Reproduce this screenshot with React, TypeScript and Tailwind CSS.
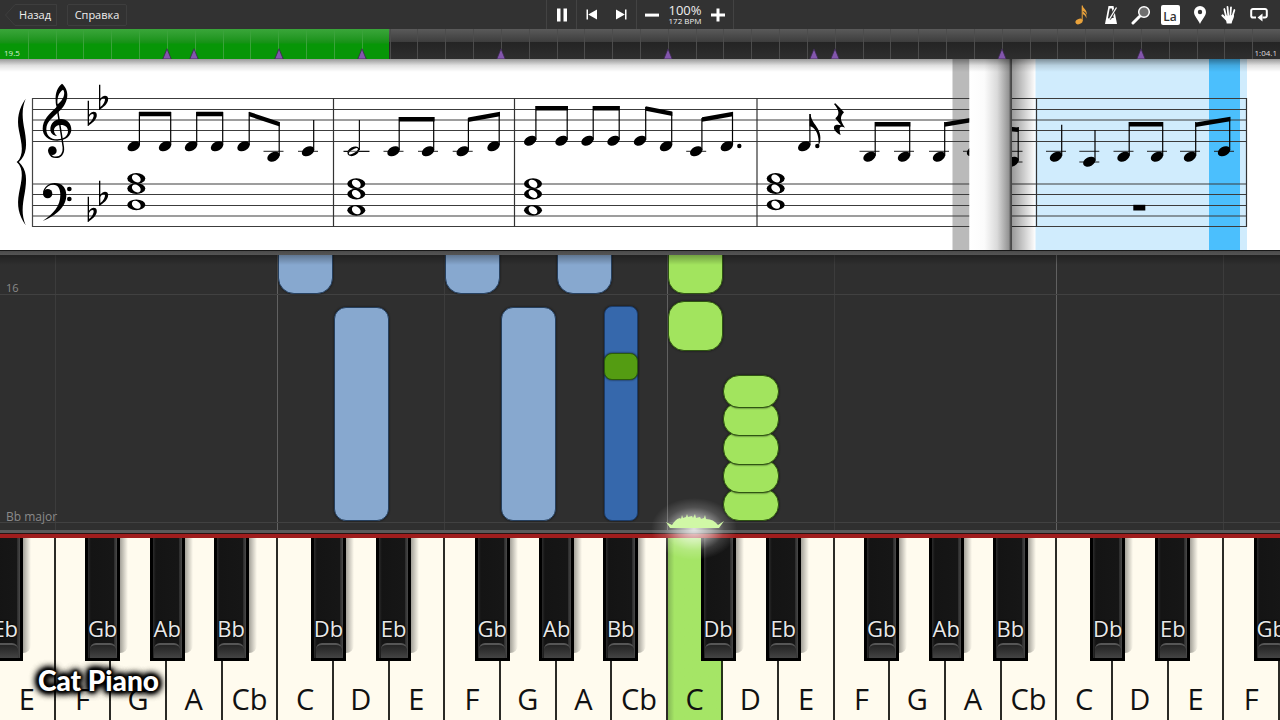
import React from "react";

const WHITE_KEYS = [
  "E", "F", "G", "A", "Cb", "C", "D", "E", "F", "G", "A", "Cb",
  "C", "D", "E", "F", "G", "A", "Cb", "C", "D", "E", "F",
];
const KEY = 100 / WHITE_KEYS.length;
const PRESSED = 12;

// Left edges of the black keys, counted in white-key widths
const BLACK_KEYS: [string, number][] = [
  ["Eb", -0.22], ["Gb", 1.53], ["Ab", 2.69], ["Bb", 3.84],
  ["Db", 5.59], ["Eb", 6.76], ["Gb", 8.53], ["Ab", 9.69], ["Bb", 10.84],
  ["Db", 12.59], ["Eb", 13.76], ["Gb", 15.53], ["Ab", 16.69], ["Bb", 17.84],
  ["Db", 19.59], ["Eb", 20.76], ["Gb", 22.53],
];

const LANES = [1, 5, 8, 12, 15, 19, 22];
const STRONG_LANES = [5, 12, 19];

const BLUE = "border-[#26405f] bg-[#87a8cf]";
const DARK_BLUE = "border-[#1c3d6b] bg-[#3668ac]";
const GREEN = "border-[#2f5511] bg-[#a2e45e]";
const DARK_GREEN = "border-[#2b5c0c] bg-[#549c12]";

// lane, width in lanes, distance from the hit line, height, style
type Note = { lane: number; width: number; bottom: number; height: number; look: string };
const NOTES: Note[] = [
  { lane: 5, width: 0.99, bottom: 236, height: 60, look: `rounded-2xl ${BLUE}` },
  { lane: 8, width: 0.99, bottom: 236, height: 60, look: `rounded-2xl ${BLUE}` },
  { lane: 10, width: 0.99, bottom: 236, height: 60, look: `rounded-2xl ${BLUE}` },
  { lane: 12, width: 0.99, bottom: 236, height: 60, look: `rounded-2xl ${GREEN}` },
  { lane: 6, width: 0.99, bottom: 9, height: 214, look: `rounded-xl ${BLUE}` },
  { lane: 9, width: 0.99, bottom: 9, height: 214, look: `rounded-xl ${BLUE}` },
  { lane: 10.86, width: 0.6, bottom: 9, height: 215, look: `rounded-lg ${DARK_BLUE}` },
  { lane: 10.86, width: 0.6, bottom: 150, height: 27, look: `rounded-lg ${DARK_GREEN}` },
  { lane: 12, width: 0.99, bottom: 179, height: 50, look: `rounded-2xl ${GREEN}` },
  { lane: 13, width: 0.99, bottom: 9, height: 33, look: `rounded-2xl ${GREEN}` },
  { lane: 13, width: 0.99, bottom: 37, height: 34, look: `rounded-2xl ${GREEN}` },
  { lane: 13, width: 0.99, bottom: 65, height: 34, look: `rounded-2xl ${GREEN}` },
  { lane: 13, width: 0.99, bottom: 94, height: 34, look: `rounded-2xl ${GREEN}` },
  { lane: 13, width: 0.99, bottom: 122, height: 33, look: `rounded-2xl ${GREEN}` },
];

const TICKS = Array.from({ length: 45 }, (_, i) => i + 1);
const MARKERS = [166, 193, 278, 361, 500, 667, 813, 834, 1001, 1140];

function ToolButton({ label, children }: { label: string; children: React.ReactNode }) {
  return (
    <button aria-label={label} className="flex h-[29px] w-[29px] items-center justify-center text-white">
      {children}
    </button>
  );
}

function Toolbar() {
  return (
    <header className="grid h-[29px] grid-cols-[1fr_auto_1fr] items-center bg-[#323232]">
      <div className="flex items-center gap-[10px] pl-[5px] text-[11px] leading-4 text-[#eeeeee]">
        <button className="relative flex h-[22px] w-[52px] items-center justify-end pr-[6px]">
          <svg viewBox="0 0 52 22" className="absolute inset-0 h-full w-full" fill="none" stroke="#3e3e3e">
            <path d="M51.5 .5H10L.5 11l9.500 10.500h41.500z" />
          </svg>
          <span className="relative">Назад</span>
        </button>
        <button className="flex h-[22px] w-[60px] items-center justify-center rounded-[2px] border border-[#3e3e3e]">
          Справка
        </button>
      </div>

      <div className="flex h-full items-center">
        <div className="flex h-full w-[31px] items-center justify-center border-x border-[#434343]">
          <button aria-label="Pause">
            <svg width="12" height="14" viewBox="0 0 12 14" fill="#fff"><path d="M1 .5h3.500v13H1zM7.500 .5H11v13H7.500z" /></svg>
          </button>
        </div>
        <div className="flex h-full w-[60px] items-center justify-around border-r border-[#434343]">
          <button aria-label="Previous">
            <svg width="12" height="11" viewBox="0 0 12 11" fill="#fff"><path d="M.5 .5H2v10H.5zM2.200 5.500 11 .5v10z" /></svg>
          </button>
          <button aria-label="Next">
            <svg width="12" height="11" viewBox="0 0 12 11" fill="#fff"><path d="M11.500 .5H10v10h1.500zM9.800 5.500 1 .5v10z" /></svg>
          </button>
        </div>
        <div className="flex h-full w-[97px] items-center justify-between border-r border-[#434343] px-[8px]">
          <button aria-label="Slower">
            <svg width="14" height="14" viewBox="0 0 14 14" fill="#fff"><path d="M0 5.600h14v3H0z" /></svg>
          </button>
          <div className="flex flex-col items-center text-[#eeeeee]">
            <span className="text-[13px] leading-[13px]">100%</span>
            <span className="text-[8px] leading-[8px]">172 BPM</span>
          </div>
          <button aria-label="Faster">
            <svg width="14" height="14" viewBox="0 0 14 14" fill="#fff"><path d="M5.500 .5h3v5H14v3H8.500v5h-3v-5H0v-3h5.500z" /></svg>
          </button>
        </div>
      </div>

      <div className="mr-[7px] flex w-[206px] items-center justify-between justify-self-end">
        <ToolButton label="Notes">
          <svg width="16" height="22" viewBox="0 0 16 22" fill="#e9a23b">
            <ellipse cx="5" cy="17.500" rx="3.700" ry="2.600" transform="rotate(-25 5 17.500)" />
            <path d="M7.700 1.500h1.100C9 5 13.500 5.500 12.800 11c-.6-2.400-2-3.500-4.100-4.300V17H7.700z" />
            <path d="M8.500 6c1 3 5 3.500 3.800 8.500-.4-2.400-1.700-3.700-3.800-4.500z" />
          </svg>
        </ToolButton>
        <ToolButton label="Metronome">
          <svg width="16" height="20" viewBox="0 0 16 20" fill="none">
            <path d="M5.500 1h5l3.500 18H2z" fill="#fff" />
            <path d="M6.700 3.500h2.200l1.800 9.500H5z" fill="#323232" />
            <path d="M6.500 14 13.500 2.500" stroke="#323232" strokeWidth="3" />
            <path d="M6.500 14 13.500 2.500" stroke="#fff" strokeWidth="1.300" />
          </svg>
        </ToolButton>
        <ToolButton label="Zoom">
          <svg width="20" height="20" viewBox="0 0 20 20" fill="none" stroke="#fff">
            <path d="M2 18 8.500 11.500" strokeWidth="3" strokeLinecap="round" />
            <circle cx="13" cy="7" r="5.300" fill="#6e6e6e" strokeWidth="1.500" />
          </svg>
        </ToolButton>
        <ToolButton label="Note names">
          <span className="flex h-[20px] w-[19px] items-end justify-center rounded-[2px] bg-white pb-[2px] text-[12px] font-semibold leading-none text-[#333333]">La</span>
        </ToolButton>
        <ToolButton label="Bookmark">
          <svg width="14" height="18" viewBox="0 0 14 18" fill="#fff" fillRule="evenodd">
            <path d="M7 0a6 6 0 0 1 6 6c0 4-4 7.500-6 12C5 13.500 1 10 1 6a6 6 0 0 1 6-6zm0 3.800a2.200 2.200 0 1 0 0 4.400 2.200 2.200 0 0 0 0-4.400z" />
          </svg>
        </ToolButton>
        <ToolButton label="Hands">
          <svg width="16" height="20" viewBox="0 0 16 20" fill="#fff" stroke="#fff" strokeLinecap="round">
            <path d="M4 10.500 13 10c.4 3-1.800 5-2.400 8.500H5.700C5.500 16 4.300 14 4 10.500z" stroke="none" />
            <path d="M5 11 3.300 4M7.200 10 6.500 2M9.400 10 10 2.300M11.400 11.500 13.400 5" strokeWidth="1.800" />
            <path d="M5.500 14.500 1.500 10.500" strokeWidth="2.200" />
          </svg>
        </ToolButton>
        <ToolButton label="Loop">
          <svg width="18" height="15" viewBox="0 0 18 15" fill="none" stroke="#fff" strokeWidth="2">
            <path d="M6 10.500H3A1.800 1.800 0 0 1 1.200 8.700V3.800A1.800 1.800 0 0 1 3 2h12a1.800 1.800 0 0 1 1.800 1.800v4.900A1.800 1.800 0 0 1 15 10.500h-2.500" />
            <path d="M12.500 6.500v8l-5-4z" fill="#fff" stroke="none" />
          </svg>
        </ToolButton>
      </div>
    </header>
  );
}

function Timeline() {
  return (
    <div className="relative h-[30px] overflow-hidden bg-linear-to-b from-[#5a5a5a] via-[#3c3c3c] via-45% to-[#2a2a2a]">
      <div className="absolute inset-x-0 bottom-0 h-[17px] bg-linear-to-b from-[#242424] to-[#2e2e2e]" />
      <div className="absolute inset-y-0 left-0 w-[30.4%] bg-linear-to-b from-[#3aa63a] from-0% via-[#169216] via-45% to-[#079607] to-50%" />
      {TICKS.map((i) => (
        <div
          key={i}
          className={i < 14 ? "absolute inset-y-0 w-px bg-[#3aa33a]" : "absolute inset-y-0 w-px bg-[#4c4c4c]"}
          style={{ left: `${(i * 100) / 46}%` }}
        />
      ))}
      {MARKERS.map((x) => (
        <svg key={x} viewBox="0 0 10 11" className="absolute bottom-0 -ml-[4px] h-[11px] w-[10px]" style={{ left: `${x / 12.8}%` }}>
          <path d="M5 .8 9.200 11H.8z" fill="#8356ad" stroke="#3a2a4d" strokeWidth=".8" />
        </svg>
      ))}
      <span className="absolute bottom-[1px] left-[4px] text-[8px] leading-[10px] text-[#d6f0d6]">19.5</span>
      <span className="absolute bottom-[1px] right-[3px] text-[8px] leading-[10px] text-[#dddddd]">1:04.1</span>
    </div>
  );
}

const STAFF_LINES = [98.5, 109.5, 120, 130.500, 141.500, 184, 194.500, 205.500, 216, 226.500];

// x of the head, y of the head, y of the stem's top
const HEADS: [number, number, number][] = [
  [133.700, 146.300, 112], [165, 146.300, 112], [191, 146.300, 112], [217, 146.300, 112],
  [243.500, 146.300, 112], [273.500, 156.700, 122], [308, 151.300, 120],
  [393.500, 151.300, 117], [428, 151.300, 117], [462.700, 151.300, 118], [493.500, 146.300, 112],
  [530.200, 140.700, 106], [561.500, 140.700, 106], [587.500, 140.700, 106], [613.500, 140.700, 106],
  [640, 140.700, 107], [666, 146.300, 112], [696.200, 151.300, 118], [726.800, 146.300, 112],
  [804.200, 146.300, 114], [869.500, 156.700, 122], [904, 156.700, 122], [939, 156.700, 122],
  [973, 151.300, 120], [1012.500, 161.700, 127],
  [1056, 156.700, 124.700], [1089.300, 161.700, 130], [1123.500, 156.700, 122], [1157, 156.700, 122],
  [1190, 156.700, 122], [1224, 151.300, 117],
];

// Beams: x1, y1, x2, y2 of the upper edge
const BEAMS: [number, number, number, number][] = [
  [139, 111.700, 171, 111.700], [196.300, 111.700, 223, 111.700], [249, 111.700, 279.700, 122],
  [399, 117, 434.500, 117], [468.200, 117.500, 500, 111.700],
  [535.800, 106, 568, 106], [593, 106, 619.500, 106], [645.700, 106.300, 672.300, 111.500],
  [702, 117.300, 733, 111.700], [875, 122, 910.300, 122], [944.700, 122.200, 979, 116.500],
  [1002, 126, 1018.600, 127.500], [1129, 122, 1163, 122], [1195.700, 122.500, 1230.300, 116.800],
];

const WHOLES: [number, number][] = [
  [136.300, 178.500], [136.300, 188.500], [136.300, 204.800],
  [356.300, 183.700], [356.300, 194], [356.300, 210.300],
  [533, 183.700], [533, 194], [533, 210.300],
  [775.700, 178.500], [775.700, 188.500], [775.700, 204.800],
];

const FLAT = "M-1 0H3V42C9 33 18 31 23 35 29 41 27 53 18 62 12 68 6 71 1 76H-1zM3 49V67C12 60 18 50 17 42 14 37 7 41 3 49z";
const HALF_BRACE =
  "M77 116C56 146 50 175 57 212C65 252 74 284 50 307H56C82 282 81 254 74 212C67 175 64 148 77 116z";

function Heads() {
  return (
    <g>
      {HEADS.map(([x, y, top]) => (
        <g key={x}>
          {y > 150 && <path d={`M${x - 10} 151.300h20`} stroke="#222" />}
          {y > 160 && <path d={`M${x - 10} 162h20`} stroke="#222" />}
          <ellipse cx={x} cy={y} rx="6.600" ry="4.500" transform={`rotate(-28 ${x} ${y})`} />
          <path d={`M${x + 5.700} ${y - 1}V${top}`} stroke="#000" strokeWidth="1.200" />
        </g>
      ))}
      {BEAMS.map(([x1, y1, x2, y2]) => (
        <path key={x1} d={`M${x1} ${y1}L${x2} ${y2}v4.500L${x1} ${y1 + 4.500}z`} />
      ))}
    </g>
  );
}

function SheetMusic() {
  return (
    <svg viewBox="0 59 1280 191" className="block h-auto w-full bg-white" role="img" aria-label="Sheet music">
      <defs>
        <linearGradient id="top" x1="0" y1="0" x2="0" y2="1">
          <stop offset="0" stopColor="#000" stopOpacity=".4" />
          <stop offset=".5" stopColor="#000" stopOpacity=".12" />
          <stop offset="1" stopColor="#000" stopOpacity="0" />
        </linearGradient>
        <linearGradient id="curl">
          <stop offset="0" stopColor="#fff" />
          <stop offset=".35" stopColor="#fbfbfb" />
          <stop offset=".65" stopColor="#dadada" />
          <stop offset=".93" stopColor="#929292" />
          <stop offset=".96" stopColor="#555" />
          <stop offset="1" stopColor="#444" />
        </linearGradient>
        <linearGradient id="fold">
          <stop offset="0" stopColor="#000" stopOpacity=".4" />
          <stop offset=".5" stopColor="#000" stopOpacity=".2" />
          <stop offset="1" stopColor="#000" stopOpacity="0" />
        </linearGradient>
        <clipPath id="pages"><path d="M0 59h969.500v191H0zM1012 59h268v191h-268z" /></clipPath>
      </defs>

      <rect x="1035.500" y="59" width="211.500" height="191" fill="#d0ecfd" />
      <rect x="1209" y="59" width="31" height="191" fill="#4bbffd" />
      <rect x="952.500" y="59" width="17" height="191" fill="#bababa" />

      <g clipPath="url(#pages)">
        {STAFF_LINES.map((y) => (
          <path key={y} d={`M32.500 ${y}H1247`} stroke="#3c3c3c" strokeWidth="1.100" />
        ))}
        {[333.500, 514.500, 757, 1036.500, 1246.500].map((x) => (
          <path key={x} d={`M${x} 98V227`} stroke="#333" strokeWidth="1.200" />
        ))}
        <path d="M32.500 98V227" stroke="#444" strokeWidth="1.200" />
        <Heads />

        {/* half note */}
        <path d="M343.500 151.300h26M359.400 150V120" stroke="#111" strokeWidth="1.200" />
        <ellipse cx="353.400" cy="151.300" rx="6.400" ry="4.300" transform="rotate(-28 353.400 151.300)" />
        <ellipse cx="353.400" cy="151.300" rx="5.200" ry="1.800" fill="#fff" transform="rotate(-32 353.400 151.300)" />
        <path d="M348 151.300h11" stroke="#333" strokeWidth=".8" />

        {WHOLES.map(([x, y]) => (
          <g key={`${x}-${y}`}>
            <ellipse cx={x} cy={y} rx="9" ry="5.400" />
            <ellipse cx={x} cy={y} rx="4.800" ry="3.500" fill="#fff" transform={`rotate(35 ${x} ${y})`} />
          </g>
        ))}
        <circle cx="739.300" cy="146" r="2.200" />
        <circle cx="817.300" cy="146" r="2.200" />
        <rect x="1133.300" y="204.800" width="12" height="5.700" />

        <g transform="translate(660 60) scale(.33333)">
          <path d="M449 162h3c1 20 12 27 22 45 9 17 10 36 1 52 3-22-2-42-12-52-5-5-9-7-14-8z" />
          <path d="M526 130c9 9 18 18 26 27-11 12-14 22 3 46-10-5-17-3-16 6 0 6 1 11 3 16-13-6-24-18-19-27 4-5 13-5 20-2l-17-21c12-10 14-22-4-43z" />
        </g>
        <g transform="translate(0 60) scale(.33333)">
          <path d={HALF_BRACE} />
          <path d={HALF_BRACE} transform="translate(0 612) scale(1 -1)" />
          <path
            fillRule="evenodd"
            d="M186 71c-12 8-21 27-19 51 0 8 1 13 3 19-22 20-42 39-42 65 0 22 18 36 44 36 25 0 42-14 42-34 0-18-13-31-31-31-19 0-32 14-32 31 0 11 8 19 20 20-6-6-9-11-9-16 0-11 9-17 21-17 13 0 21 7 21 19 0 15-14 24-32 24-21 0-34-13-33-32 1-20 17-32 36-50 17-15 27-32 27-52 0-14-8-27-16-33zm3 18c6 6 4 19-2 28-4 7-9 12-14 16-3-18 4-37 16-44z"
          />
          <path d="M171 140l19 122c2 19-8 30-22 30-9 0-17-5-20-14" fill="none" stroke="#000" strokeWidth="4.500" />
          <circle cx="157" cy="272" r="13" />
          <path d="M129 402c1-21 16-33 35-33 22 0 35 14 35 36 0 37-33 63-71 78 32-21 53-45 53-78 0-20-7-31-21-31-11 0-19 5-24 14z" />
          <circle cx="143" cy="401" r="14" />
          <circle cx="208" cy="387" r="7" />
          <circle cx="208" cy="417" r="7" />
          <g fillRule="evenodd">
            <path transform="translate(264 122)" d={FLAT} />
            <path transform="translate(298 74)" d={FLAT} />
            <path transform="translate(264 410)" d={FLAT} />
            <path transform="translate(298 362)" d={FLAT} />
          </g>
        </g>
      </g>

      <rect x="969.500" y="59" width="42.500" height="191" fill="url(#curl)" />
      <rect x="1012" y="59" width="23.500" height="191" fill="url(#fold)" />
      <rect x="0" y="59" width="1280" height="13" fill="url(#top)" />
    </svg>
  );
}

function PianoRoll() {
  return (
    <section className="relative min-h-[275px] flex-1 overflow-hidden bg-[#2f2f2f]">
      {LANES.map((n) => (
        <div
          key={n}
          className={STRONG_LANES.includes(n) ? "absolute inset-y-0 -ml-px w-px bg-[#616161]" : "absolute inset-y-0 -ml-px w-px bg-[#3c3c3c]"}
          style={{ left: `${n * KEY}%` }}
        />
      ))}
      <div className="absolute inset-x-0 bottom-[235px] h-px bg-[#414141]" />
      <div className="absolute inset-x-0 bottom-[7px] h-px bg-[#414141]" />
      <span className="absolute bottom-[234px] left-[6px] text-[11px] leading-4 text-[#8a8a8a]">16</span>
      <span className="absolute bottom-[5px] left-[6px] text-[12px] leading-4 text-[#8a8a8a]">Bb major</span>
      {NOTES.map((n, i) => (
        <div
          key={i}
          className={`absolute border-[1px] shadow-[0_0_2px_#111111] ${n.look}`}
          style={{ left: `${n.lane * KEY}%`, width: `${n.width * KEY}%`, bottom: n.bottom, height: n.height }}
        />
      ))}
      <div className="absolute inset-x-0 top-0 h-[10px] bg-linear-to-b from-black/30 to-transparent" />
    </section>
  );
}

function HitFlare() {
  return (
    <svg
      viewBox="0 0 90 70"
      className="pointer-events-none absolute -top-[43px] -ml-[17px] h-[70px] w-[90px]"
      style={{ left: `${PRESSED * KEY}%` }}
    >
      <defs>
        <radialGradient id="flare">
          <stop offset="0" stopColor="#fff" stopOpacity=".85" />
          <stop offset=".4" stopColor="#fff" stopOpacity=".5" />
          <stop offset=".7" stopColor="#fff" stopOpacity=".16" />
          <stop offset="1" stopColor="#fff" stopOpacity="0" />
        </radialGradient>
      </defs>
      <ellipse cx="43" cy="34" rx="43" ry="31" fill="url(#flare)" />
      <path
        d="M19 33l-4-6 6 3c2-3 4-6 8-7l1 1 1-4 1 3 3-1 1-3 1 3 4-1 1 2 2-4 1 4 4-1 1 2 3-1 1-3 1 4c5 0 9 2 12 6l6-4-5 7z"
        fill="#d0f8a6"
      />
    </svg>
  );
}

function Keyboard() {
  return (
    <section className="relative h-[182px] shrink-0" aria-label="Keyboard">
      <div className="grid h-full grid-cols-[repeat(23,minmax(0,1fr))]">
        {WHITE_KEYS.map((name, i) => (
          <button
            key={i}
            className={
              i === PRESSED
                ? "flex items-end justify-center border-r-2 border-[#26331a] bg-linear-to-r from-[#86b957] via-[#a5e566] via-12% to-[#a5e566] pb-[1px] text-[29px] leading-[40px] text-[#111111]"
                : "flex items-end justify-center border-r-2 border-[#2b2a26] bg-[#fffbee] pb-[1px] text-[29px] leading-[40px] text-[#111111]"
            }
          >
            {name}
          </button>
        ))}
      </div>
      <div className="absolute inset-x-0 top-0 h-[123px] overflow-hidden">
        {BLACK_KEYS.map(([name, at], i) => (
          <div key={i} className="absolute top-0 h-[123px] w-[2.730%]" style={{ left: `${at * KEY}%` }}>
            <div className="absolute inset-y-0 -right-[8px] bottom-[8px] w-[10px] rounded-br-lg bg-linear-to-r from-black/45 to-transparent" />
            <button className="relative flex h-full w-full flex-col items-center justify-end border-x-[3px] border-b-[3px] border-black bg-linear-to-r from-[#2c2c2c] via-[#141414] via-10% to-[#161616] to-85%">
              <span className="absolute inset-y-0 right-0 w-[3px] bg-linear-to-r from-[#2a2a2a] to-[#4a4a4a]" />
              <span className="relative text-[22px] leading-[30px] text-[#e8e8e8] [text-shadow:0_0_2px_#000000,0_0_2px_#000000]">{name}</span>
              <span className="relative h-[15px] w-[26px] rounded-t-[6px] border-t-2 border-[#565656] bg-linear-to-b from-[#242424] to-[#434343]" />
            </button>
          </div>
        ))}
      </div>
      <HitFlare />
      <p className="absolute bottom-[22px] left-[38px] font-['Lato'] text-[28px] font-black leading-[36px] text-white [text-shadow:0_0_3px_#000000,0_0_3px_#000000,0_0_4px_#000000,0_0_4px_#000000,0_0_6px_#000000,0_0_6px_#000000,0_0_8px_#000000,0_0_8px_#000000,0_0_10px_#000000,0_0_10px_#000000]">
        Cat Piano
      </p>
    </section>
  );
}

export default function App() {
  return (
    <main className="flex min-h-screen w-full flex-col overflow-hidden bg-[#2f2f2f] font-['Open_Sans','Noto_Sans',sans-serif]">
      <Toolbar />
      <Timeline />
      <SheetMusic />
      <div className="h-[5px] shrink-0 border-t border-[#181818] bg-linear-to-b from-[#4a4a4a] to-[#555555]" />
      <PianoRoll />
      <div className="h-[4px] shrink-0 border-b border-[#2a1414] bg-[#5a5a5a]" />
      <div className="h-[4px] shrink-0 bg-[#a01d1d]" />
      <Keyboard />
    </main>
  );
}
